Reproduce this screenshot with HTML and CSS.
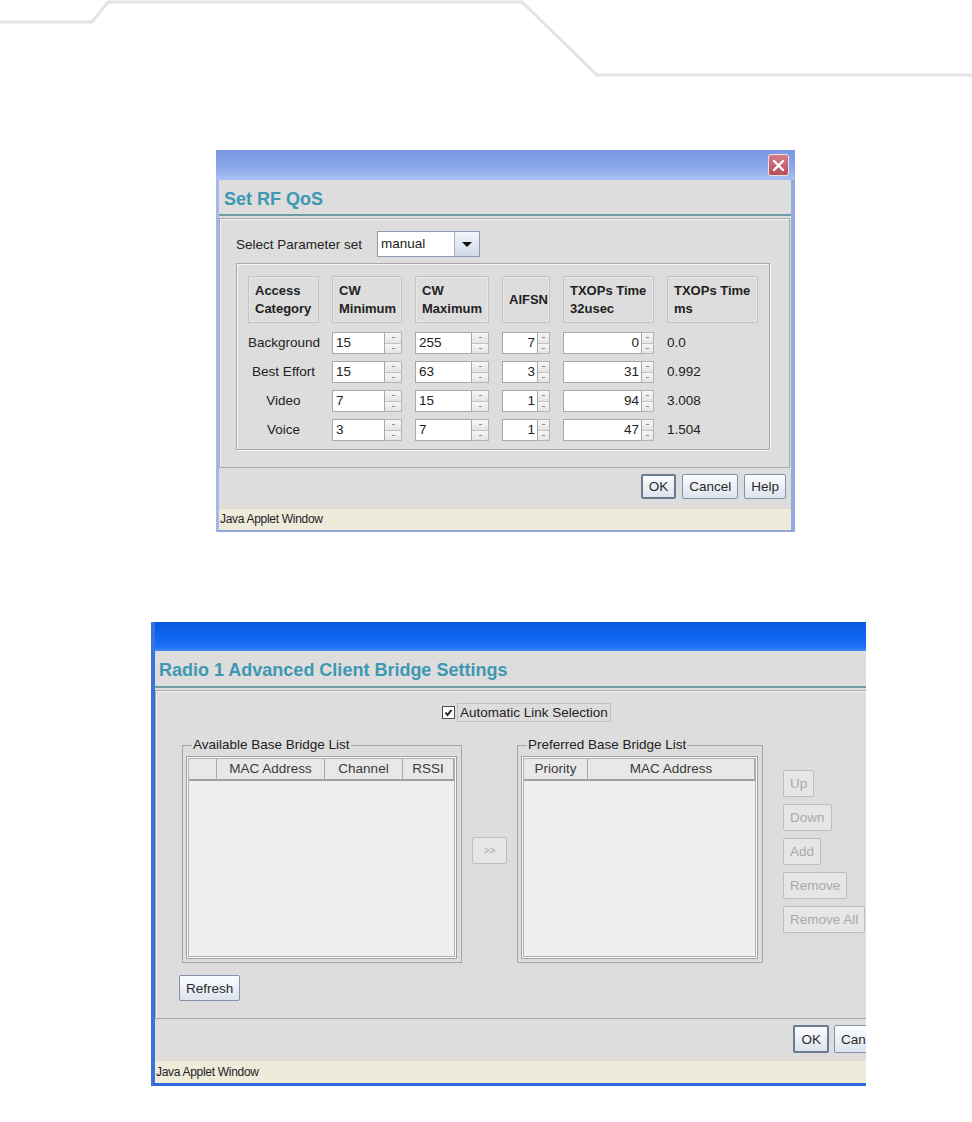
FILE: index.html
```html
<!DOCTYPE html>
<html lang="en">
<head>
<meta charset="UTF-8" />
<meta name="viewport" content="width=device-width, initial-scale=1" />
<title>Set RF QoS</title>
<link rel="stylesheet" href="styles.css">
</head>
<body>

<svg class="deco" width="972" height="80" viewBox="0 0 972 80">
  <polyline points="0,22 92,22 108,2 522,2 597,75 972,75" fill="none" stroke="#e3e3e3" stroke-width="3" />
</svg>

<!-- first dialog: RF QoS -->
<div class="dialog qos">
  <div class="titlebar">
    <span class="close">
      <svg width="13" height="13" viewBox="0 0 13 13"><path d="M2 2L11 11M11 2L2 11" stroke="#fff" stroke-width="2.4" stroke-linecap="round" /></svg>
    </span>
  </div>
  <div class="heading">Set RF QoS</div>

  <div class="panel qos-panel">
    <div class="param-row">
      <span class="param-label">Select Parameter set</span>
      <div class="combo"><span class="combo-val">manual</span><span class="combo-btn"></span></div>
    </div>

    <div class="qos-table">
      <div class="hcell">Access<br>Category</div>
      <div class="hcell">CW<br>Minimum</div>
      <div class="hcell">CW<br>Maximum</div>
      <div class="hcell">AIFSN</div>
      <div class="hcell">TXOPs Time<br>32usec</div>
      <div class="hcell">TXOPs Time<br>ms</div>

      <div class="rlabel">Background</div>
      <div class="spin"><span class="val">15</span><span class="arrows"><i></i><i></i></span></div>
      <div class="spin"><span class="val">255</span><span class="arrows"><i></i><i></i></span></div>
      <div class="spin small num"><span class="val">7</span><span class="arrows"><i></i><i></i></span></div>
      <div class="spin small num"><span class="val">0</span><span class="arrows"><i></i><i></i></span></div>
      <div class="ms">0.0</div>

      <div class="rlabel">Best Effort</div>
      <div class="spin"><span class="val">15</span><span class="arrows"><i></i><i></i></span></div>
      <div class="spin"><span class="val">63</span><span class="arrows"><i></i><i></i></span></div>
      <div class="spin small num"><span class="val">3</span><span class="arrows"><i></i><i></i></span></div>
      <div class="spin small num"><span class="val">31</span><span class="arrows"><i></i><i></i></span></div>
      <div class="ms">0.992</div>

      <div class="rlabel">Video</div>
      <div class="spin"><span class="val">7</span><span class="arrows"><i></i><i></i></span></div>
      <div class="spin"><span class="val">15</span><span class="arrows"><i></i><i></i></span></div>
      <div class="spin small num"><span class="val">1</span><span class="arrows"><i></i><i></i></span></div>
      <div class="spin small num"><span class="val">94</span><span class="arrows"><i></i><i></i></span></div>
      <div class="ms">3.008</div>

      <div class="rlabel">Voice</div>
      <div class="spin"><span class="val">3</span><span class="arrows"><i></i><i></i></span></div>
      <div class="spin"><span class="val">7</span><span class="arrows"><i></i><i></i></span></div>
      <div class="spin small num"><span class="val">1</span><span class="arrows"><i></i><i></i></span></div>
      <div class="spin small num"><span class="val">47</span><span class="arrows"><i></i><i></i></span></div>
      <div class="ms">1.504</div>
    </div>
  </div>

  <div class="footer">
    <button class="btn focus">OK</button>
    <button class="btn">Cancel</button>
    <button class="btn">Help</button>
  </div>
  <div class="status">Java Applet Window</div>
</div>

<!-- second dialog: client bridge settings (cut at the right) -->
<div class="dialog bridge">
  <div class="bridge-inner">
    <div class="titlebar"></div>
    <div class="heading">Radio 1 Advanced Client Bridge Settings</div>

    <div class="panel bridge-panel">
      <div class="auto-row">
        <span class="check">
          <svg width="11" height="11" viewBox="0 0 11 11"><path d="M2.5 5.5L4.5 8L8.5 3" fill="none" stroke="#222" stroke-width="2" /></svg>
        </span>
        <span class="auto-label">Automatic Link Selection</span>
      </div>

      <div class="lists">
        <fieldset class="group left">
          <legend>Available Base Bridge List</legend>
          <div class="list-box">
            <div class="list-head avail">
              <span></span><span>MAC Address</span><span>Channel</span><span>RSSI</span>
            </div>
          </div>
        </fieldset>

        <button class="btn off move">&gt;&gt;</button>

        <fieldset class="group right">
          <legend>Preferred Base Bridge List</legend>
          <div class="list-box">
            <div class="list-head pref">
              <span>Priority</span><span>MAC Address</span>
            </div>
          </div>
        </fieldset>

        <div class="side-btns">
          <button class="btn off">Up</button>
          <button class="btn off">Down</button>
          <button class="btn off">Add</button>
          <button class="btn off">Remove</button>
          <button class="btn off">Remove All</button>
        </div>
      </div>

      <button class="btn refresh">Refresh</button>
    </div>

    <div class="footer">
      <button class="btn focus">OK</button>
      <button class="btn">Cancel</button>
    </div>
    <div class="status">Java Applet Window</div>
  </div>
</div>

</body>
</html>
```

FILE: styles.css
```css
body {
  margin: 0;
  background: #fff;
  font-family: "Liberation Sans", Arial, sans-serif;
  font-size: 13.5px;
  color: #222;
}

.deco {
  display: block;
}

/* Shared dialog frame */
.dialog {
  background: #dddddd;
  box-sizing: border-box;
}

.heading {
  font-size: 18px;
  font-weight: bold;
  color: #3d98b2;
  border-bottom: 2px solid #6f9ca5;
  margin-bottom: 2px;
}

.panel {
  box-sizing: border-box;
  border: 1px solid #a9a9a9;
  box-shadow: inset 1px 1px 0 #f2f2f2;
}

.footer {
  box-sizing: border-box;
  display: flex;
  justify-content: flex-end;
  align-items: flex-start;
}

.status {
  background: #efebdb;
  border-top: 1px solid #e2ddca;
  box-sizing: border-box;
  font-size: 12px;
  letter-spacing: -0.3px;
  padding-left: 1px;
}

/* Buttons */
.btn {
  font-family: "Liberation Sans", Arial, sans-serif;
  font-size: 13.5px;
  color: #2a2a2a;
  height: 25px;
  padding: 0 6px;
  box-sizing: border-box;
  border: 1px solid #8392a8;
  border-radius: 2px;
  background: linear-gradient(#fbfcfe, #dde4ee);
}

.btn.focus {
  border: 2px solid #6b7a8e;
}

.btn.off {
  color: #a9a9a9;
  border-color: #bdbdbd;
  background: #e6e6e6;
}

/* ---------- RF QoS ---------- */
.qos {
  width: 579px;
  margin: 70px 0 0 216px;
  border-left: 3px solid #a4b9e8;
  border-right: 4px solid #93abe2;
  border-bottom: 2px solid #8fa5dc;
}

.qos .titlebar {
  height: 30px;
  box-sizing: border-box;
  margin: 0 -4px 0 -3px;
  padding: 4px 6px 0 0;
  display: flex;
  justify-content: flex-end;
  background: linear-gradient(#7a98e2, #8aa7ea 55%, #aac1f3);
}

.close {
  width: 21px;
  height: 22px;
  box-sizing: border-box;
  border: 1px solid #f3dede;
  border-radius: 3px;
  background: linear-gradient(#d87c89, #b64e5d);
  display: flex;
  align-items: center;
  justify-content: center;
}

.qos .heading {
  height: 29px;
  line-height: 29px;
  padding: 5px 0 0 5px;
}

.qos-panel {
  height: 250px;
  margin-right: 1px;
  padding: 12px 0 0 16px;
}

.param-row {
  display: flex;
  align-items: center;
  height: 26px;
}

.param-label {
  width: 141px;
}

.combo {
  display: flex;
  width: 103px;
  height: 26px;
  box-sizing: border-box;
  border: 1px solid #8d9db5;
  background: #fff;
}

.combo-val {
  flex: 1;
  padding-left: 3px;
  line-height: 24px;
}

.combo-btn {
  width: 24px;
  border-left: 1px solid #a3b3c9;
  background: linear-gradient(#f4f7fb, #cfd9e8);
  display: flex;
  align-items: center;
  justify-content: center;
}

.combo-btn::after {
  content: "";
  border-left: 5px solid transparent;
  border-right: 5px solid transparent;
  border-top: 5px solid #111;
}

.qos-table {
  margin-top: 6px;
  width: 534px;
  box-sizing: border-box;
  border: 1px solid #a9a9a9;
  box-shadow: 1px 1px 0 #f4f4f4, inset 1px 1px 0 #f4f4f4;
  padding: 12px 0 8px 11px;
  display: grid;
  grid-template-columns: 71px 70px 74px 48px 91px 91px;
  column-gap: 13px;
  row-gap: 7px;
}

.hcell {
  height: 47px;
  margin-bottom: 2px;
  box-sizing: border-box;
  border: 1px solid #c4c4c4;
  box-shadow: inset 0 0 0 1px #e7e7e7;
  display: flex;
  align-items: center;
  padding: 0 6px;
  font-size: 13px;
  font-weight: bold;
  line-height: 18px;
  white-space: nowrap;
}

.rlabel {
  text-align: center;
  line-height: 22px;
  white-space: nowrap;
}

.ms {
  line-height: 22px;
}

/* Spinner */
.spin {
  display: flex;
  height: 22px;
}

.spin .val {
  flex: 1;
  box-sizing: border-box;
  background: #fff;
  border: 1px solid #a8a8a8;
  padding: 0 3px;
  line-height: 20px;
}

.spin.num .val {
  text-align: right;
  padding-right: 2px;
}

.spin .arrows {
  width: 17px;
  display: flex;
  flex-direction: column;
  box-sizing: border-box;
  border: 1px solid #b4b4b4;
  border-left: 0;
}

.spin.small .arrows {
  width: 12px;
}

.arrows i {
  flex: 1;
  background: linear-gradient(#f7f7f7, #e4e4e4);
  display: flex;
  align-items: center;
  justify-content: center;
}

.arrows i:first-child {
  border-bottom: 1px solid #c2c2c2;
}

.arrows i::after {
  content: "";
  width: 3px;
  height: 1px;
  background: #8c8c8c;
}

/* ---------- Client Bridge ---------- */
.bridge {
  width: 715px;
  margin: 90px 0 0 151px;
  border-left: 4px solid #3a73dc;
  border-bottom: 3px solid #2d6ade;
  overflow: hidden;
}

.bridge-inner {
  width: 740px;
}

.bridge .titlebar {
  height: 29px;
  background: linear-gradient(#0a58e0, #0c63ee 40%, #1c6ff5 85%, #3d8cf8);
}

.bridge .heading {
  height: 31px;
  line-height: 31px;
  padding: 4px 0 0 4px;
}

.bridge-panel {
  height: 329px;
  padding: 12px 0 0 23px;
}

.auto-row {
  display: flex;
  align-items: center;
  gap: 2px;
  height: 19px;
  margin-left: 263px;
}

.check {
  width: 13px;
  height: 13px;
  box-sizing: border-box;
  border: 1px solid #4d4d4d;
  background: #fff;
  display: flex;
  align-items: center;
  justify-content: center;
}

.auto-label {
  border: 1px solid #bfbfbf;
  padding: 0 2px;
  line-height: 17px;
}

.lists {
  display: flex;
  align-items: flex-start;
  margin: 15px 0 0 3px;
}

.group {
  margin: 0;
  height: 226px;
  box-sizing: border-box;
  border: 1px solid #a6a6a6;
  padding: 3px 4px 3px 3px;
  min-width: 0;
}

.group legend {
  margin-left: 6px;
  padding: 0 1px;
  line-height: 16px;
}

.group.left {
  width: 280px;
}

.group.right {
  width: 246px;
}

.list-box {
  height: 203px;
  box-sizing: border-box;
  border: 1px solid #a0a0a0;
  padding: 2px;
  background: #efefef;
  box-shadow: inset 0 0 0 1px #fafafa, inset 0 0 0 2px #b0b0b0;
}

.list-head {
  display: grid;
  height: 20px;
  background: #e8e8e8;
  border-bottom: 2px solid #a0a0a0;
  color: #3a3a3a;
}

.list-head span {
  border-right: 1px solid #a8a8a8;
  text-align: center;
  line-height: 20px;
  white-space: nowrap;
}

.list-head.avail {
  grid-template-columns: 28px 108px 78px 1fr;
}

.list-head.pref {
  grid-template-columns: 64px 1fr;
}

.move {
  align-self: center;
  margin: 0 10px;
  width: 35px;
  height: 27px;
  font-size: 10px;
  padding: 0;
}

.side-btns {
  display: flex;
  flex-direction: column;
  align-items: flex-start;
  gap: 7px;
  margin: 33px 0 0 20px;
}

.side-btns .btn {
  height: 27px;
}

.refresh {
  margin-top: 12px;
  height: 26px;
}

.qos .footer {
  height: 40px;
  padding: 6px 5px 0 0;
  gap: 6px;
}

.bridge .footer {
  height: 41px;
  padding: 6px 5px 0 0;
  gap: 5px;
}

.bridge .footer .btn {
  height: 28px;
}

.qos .status {
  height: 22px;
  line-height: 21px;
}

.bridge .status {
  height: 23px;
  line-height: 22px;
}
```
